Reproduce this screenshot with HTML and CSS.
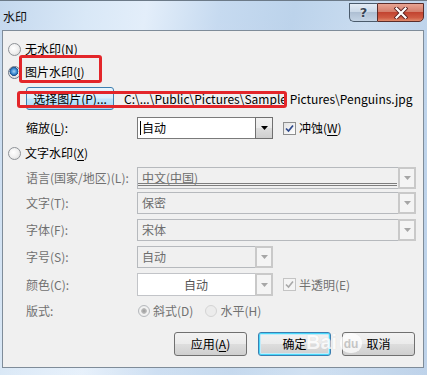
FILE: index.html
```html
<!DOCTYPE html>
<html>
<head>
<meta charset="utf-8">
<link rel="stylesheet" href="styles.css">
</head>
<body>
<div class="window">
  <div class="titlebar">
    <span class="title">水印</span>
    <div class="caption">
      <div class="cbtn help">?</div>
      <div class="cbtn close">
        <svg width="14" height="12" viewBox="0 0 14 12"><path d="M2.5 1.5 L11.5 10.5 M11.5 1.5 L2.5 10.5" stroke="#5a2020" stroke-width="4" stroke-linecap="square"/><path d="M2.5 1.5 L11.5 10.5 M11.5 1.5 L2.5 10.5" stroke="#ffffff" stroke-width="2.2" stroke-linecap="square"/></svg>
      </div>
    </div>
  </div>
  <div class="client">
    <div class="row r-none"><span class="radio"></span><span class="opt">无水印(<u>N</u>)</span></div>
    <div class="row r-pic"><span class="radio on"></span><span class="opt">图片水印(<u>I</u>)</span></div>
    <div class="row r-select"><button class="btn hot">选择图片(<u>P</u>)...</button><span class="path">C:\...\Public\Pictures\Sample Pictures\Penguins.jpg</span></div>
    <div class="row r-scale">
      <span class="label">缩放(<u>L</u>):</span>
      <div class="combo short active"><span class="caret"></span><span class="value">自动</span><span class="drop"><svg width="7" height="4" viewBox="0 0 7 4"><path d="M0 0 H7 L3.5 4 Z" fill="#000"/></svg></span></div>
      <span class="check"><svg width="9" height="9" viewBox="0 0 9 9"><path d="M1 4.5 L3.5 7 L8 1.5" stroke="#2f4a8c" stroke-width="1.7" fill="none"/></svg></span>
      <span class="opt">冲蚀(<u>W</u>)</span>
    </div>
    <div class="row r-text"><span class="radio"></span><span class="opt">文字水印(<u>X</u>)</span></div>
    <div class="row r-lang">
      <span class="label dis">语言(国家/地区)(L):</span>
      <div class="combo wide off lang"><span class="value">中文(中国)</span><span class="drop"><svg width="7" height="4" viewBox="0 0 7 4"><path d="M0 0 H7 L3.5 4 Z" fill="#a6a6a6"/></svg></span></div>
    </div>
    <div class="row r-word">
      <span class="label dis">文字(T):</span>
      <div class="combo wide off"><span class="value">保密</span><span class="drop"><svg width="7" height="4" viewBox="0 0 7 4"><path d="M0 0 H7 L3.5 4 Z" fill="#a6a6a6"/></svg></span></div>
    </div>
    <div class="row r-font">
      <span class="label dis">字体(F):</span>
      <div class="combo wide off"><span class="value">宋体</span><span class="drop"><svg width="7" height="4" viewBox="0 0 7 4"><path d="M0 0 H7 L3.5 4 Z" fill="#a6a6a6"/></svg></span></div>
    </div>
    <div class="row r-size">
      <span class="label dis">字号(S):</span>
      <div class="combo short off"><span class="value">自动</span><span class="drop"><svg width="7" height="4" viewBox="0 0 7 4"><path d="M0 0 H7 L3.5 4 Z" fill="#a6a6a6"/></svg></span></div>
    </div>
    <div class="row r-color">
      <span class="label dis">颜色(C):</span>
      <div class="combo short white"><span class="value center">自动</span><span class="drop"><svg width="7" height="4" viewBox="0 0 7 4"><path d="M0 0 H7 L3.5 4 Z" fill="#a6a6a6"/></svg></span></div>
      <span class="check dis"><svg width="9" height="9" viewBox="0 0 9 9"><path d="M1 4.5 L3.5 7 L8 1.5" stroke="#a8a8a8" stroke-width="1.6" fill="none"/></svg></span>
      <span class="opt dis">半透明(E)</span>
    </div>
    <div class="row r-layout">
      <span class="label dis">版式:</span>
      <span class="radio small dison"></span><span class="opt dis">斜式(D)</span>
      <span class="radio small dis2"></span><span class="opt dis">水平(H)</span>
    </div>
    <div class="row r-buttons">
      <button class="btn cmd">应用(<u>A</u>)</button>
      <button class="btn cmd default">确定</button>
      <button class="btn cmd">取消</button>
    </div>
  </div>
  <div class="mark mark-pic"></div>
  <div class="mark mark-path"></div>
  <div class="baidu"><span class="bai">Bai</span><span class="du">du</span></div>
</div>
</body>
</html>
```
FILE: styles.css
```css
html, body { margin: 0; padding: 0; }
body { width: 427px; height: 375px; overflow: hidden; font-family: "Noto Sans CJK SC", "Noto Sans", sans-serif; font-size: 12px; color: #000; }
u { text-decoration: underline; text-underline-offset: 2px; }

.window {
  position: relative;
  width: 427px; height: 375px; box-sizing: border-box;
  padding: 0 3px 7px 2px;
  display: flex; flex-direction: column;
  background:
    linear-gradient(to bottom, rgba(255,255,255,0.0) 0%, rgba(255,255,255,0.15) 100%),
    linear-gradient(100deg, #c4d8ee 0%, #d9e8f7 18%, #e3eefa 30%, #c6daf0 45%, #bcd3eb 60%, #c9dcf0 75%, #b3cbe6 100%);
  border-top: 1px solid #6c7a88;
}
.titlebar { height: 29px; flex: none; display: flex; align-items: flex-start; justify-content: space-between; }
.title { margin: 8px 0 0 1px; font-size: 12px; line-height: 16px; color: #111; }
.caption { display: flex; margin-top: 2px; }
.cbtn { height: 19px; box-sizing: border-box; border: 1px solid #4b5b6c; display: flex; align-items: center; justify-content: center; }
.help {
  width: 28px; border-right: none; border-radius: 0 0 0 5px;
  background: linear-gradient(to bottom, #e4ecf5 0%, #cbd9e8 45%, #aebfd3 50%, #c4d4e5 100%);
  color: #3a4656; font-family: "DejaVu Sans", sans-serif; font-size: 13px; font-weight: bold; line-height: 17px;
  text-shadow: 0 0 2px #fff;
}
.close {
  width: 47px; border-radius: 0 0 5px 0;
  background: linear-gradient(to bottom, #e8a493 0%, #d47f6d 45%, #c24431 50%, #cf5b43 80%, #e08a6c 100%);
  border-color: #5a2c2a;
}

.client {
  flex: 1; box-sizing: border-box;
  border: 1px solid #7f8c99;
  background: #f0f0f0;
  display: flex; flex-direction: column;
  padding-top: 7px;
}
.row { display: flex; align-items: center; height: 22px; line-height: 16px; flex: none; }
.r-pic { margin-top: 1px; }
.r-select { margin-top: 4px; height: 23px; }
.r-scale { margin-top: 7px; }
.r-text { margin-top: 3px; }
.r-lang { margin-top: 3px; }
.r-word { margin-top: 3px; }
.r-font { margin-top: 5px; }
.r-size { margin-top: 5px; }
.r-color { margin-top: 5px; height: 23px; }
.r-layout { margin-top: 4px; }
.r-buttons { margin-top: 10px; height: 24px; justify-content: flex-end; padding-right: 8px; gap: 11px; }

.radio {
  width: 13px; height: 13px; box-sizing: border-box; flex: none;
  border: 1px solid #8e9297; border-radius: 50%;
  margin-left: 5px; margin-right: 4px;
  background: radial-gradient(circle at 40% 40%, #ffffff 0%, #f0f0f0 50%, #d6d6d6 100%);
}
.radio.on {
  border-color: #6a7687;
  background: radial-gradient(circle at 45% 40%, #a8d2f5 0%, #3f8ed3 30%, #1a4f8c 48%, #e8e8e8 52%, #d8d8d8 100%);
}
.radio.small { width: 12px; height: 12px; margin-right: 3px; border-color: #b6b9bd; }
.radio.dison { margin-left: 1px; background: radial-gradient(circle, #9a9a9a 0%, #bdbdbd 35%, #f4f4f4 45%, #e4e4e4 100%); }
.radio.dis2 { margin-left: 12px; background: #ececec; border-color: #d4d4d4; }

.opt { white-space: nowrap; }
.dis { color: #707070; }
.label { width: 111px; margin-left: 23px; flex: none; white-space: nowrap; color: #000; }
.label.dis { color: #707070; }

.btn {
  font-family: inherit; font-size: 12px; color: #000; line-height: 16px; padding: 0;
  box-sizing: border-box; border: 1px solid #707070; border-radius: 3px;
  background: linear-gradient(to bottom, #f2f2f2 0%, #ebebeb 48%, #dddddd 52%, #cfcfcf 100%);
}
.btn.hot {
  width: 88px; height: 23px; margin-left: 23px; flex: none;
  border-color: #3c7fb1;
  background: linear-gradient(to bottom, #eaf6fd 0%, #d9f0fc 48%, #bee6fd 52%, #a7d9f5 100%);
}
.path { margin-left: 10px; white-space: nowrap; font-size: 12px; letter-spacing: 0; }
.cmd { width: 73px; height: 24px; }
.cmd.default {
  border-color: #3c7fb1;
  box-shadow: inset 0 0 0 1px #48d8fb, inset 0 0 0 2px #c3ebf9;
}

.combo {
  position: relative; height: 22px; box-sizing: border-box; flex: none;
  border: 1px solid #abadb3; display: flex; align-items: center;
}
.combo.short { width: 136px; }
.combo.wide { width: 279px; }
.combo.active { background: #fff; border-color: #7a7a7a; }
.combo.off { background: transparent; border-color: #b6b9bd; color: #6d6d6d; }
.combo.white { background: #fff; border-color: #c2c4c8; color: #555; height: 23px; }
.combo .value { padding-left: 4px; white-space: nowrap; }
.combo .value.center { flex: 1; text-align: center; padding-left: 0; padding-right: 18px; }
.caret { width: 1px; height: 14px; background: #000; margin-left: 2px; }
.combo.active .value { padding-left: 1px; }
.drop {
  position: absolute; right: -1px; top: -1px; bottom: -1px; width: 18px; box-sizing: border-box;
  display: flex; align-items: center; justify-content: center;
}
.combo.active .drop { border: 1px solid #707070; background: linear-gradient(to bottom, #f2f2f2 0%, #ebebeb 48%, #dddddd 52%, #cfcfcf 100%); }
.combo.off .drop, .combo.white .drop { border: 2px solid #c9c9c9; background: #f4f4f4; }
.combo.lang::after {
  content: ""; position: absolute; left: 0; right: 18px; top: 15px; height: 1px;
  border-top: 1px solid #7d7d7d; border-bottom: 1px solid #7d7d7d;
}

.check {
  width: 13px; height: 13px; box-sizing: border-box; flex: none;
  margin-left: 10px; margin-right: 3px;
  border: 1px solid #8e8f8f; background: linear-gradient(135deg, #e2e2e2 0%, #ffffff 100%);
  display: flex; align-items: center; justify-content: center;
}
.check.dis { border-color: #c4c4c4; background: #f4f4f4; }

.mark { position: absolute; border: 3px solid #e3262a; border-radius: 3px; box-sizing: border-box; }
.mark-pic { left: 19px; top: 54px; width: 83px; height: 28px; }
.mark-path { left: 17px; top: 90px; width: 270px; height: 17px; }

.baidu { position: absolute; left: 306px; top: 330px; display: flex; align-items: flex-end; opacity: 0.75; pointer-events: none; }
.bai { font-family: "Liberation Sans", sans-serif; font-weight: bold; font-size: 20px; line-height: 22px; color: #fff; text-shadow: 0 0 1px #c8c8c8; }
.du { margin-left: 3px; width: 22px; height: 20px; border-radius: 50% 50% 45% 45%; background: #fff; color: #bcbcbc; font-family: "Liberation Sans", sans-serif; font-weight: bold; font-size: 12px; line-height: 22px; text-align: center; }
```
